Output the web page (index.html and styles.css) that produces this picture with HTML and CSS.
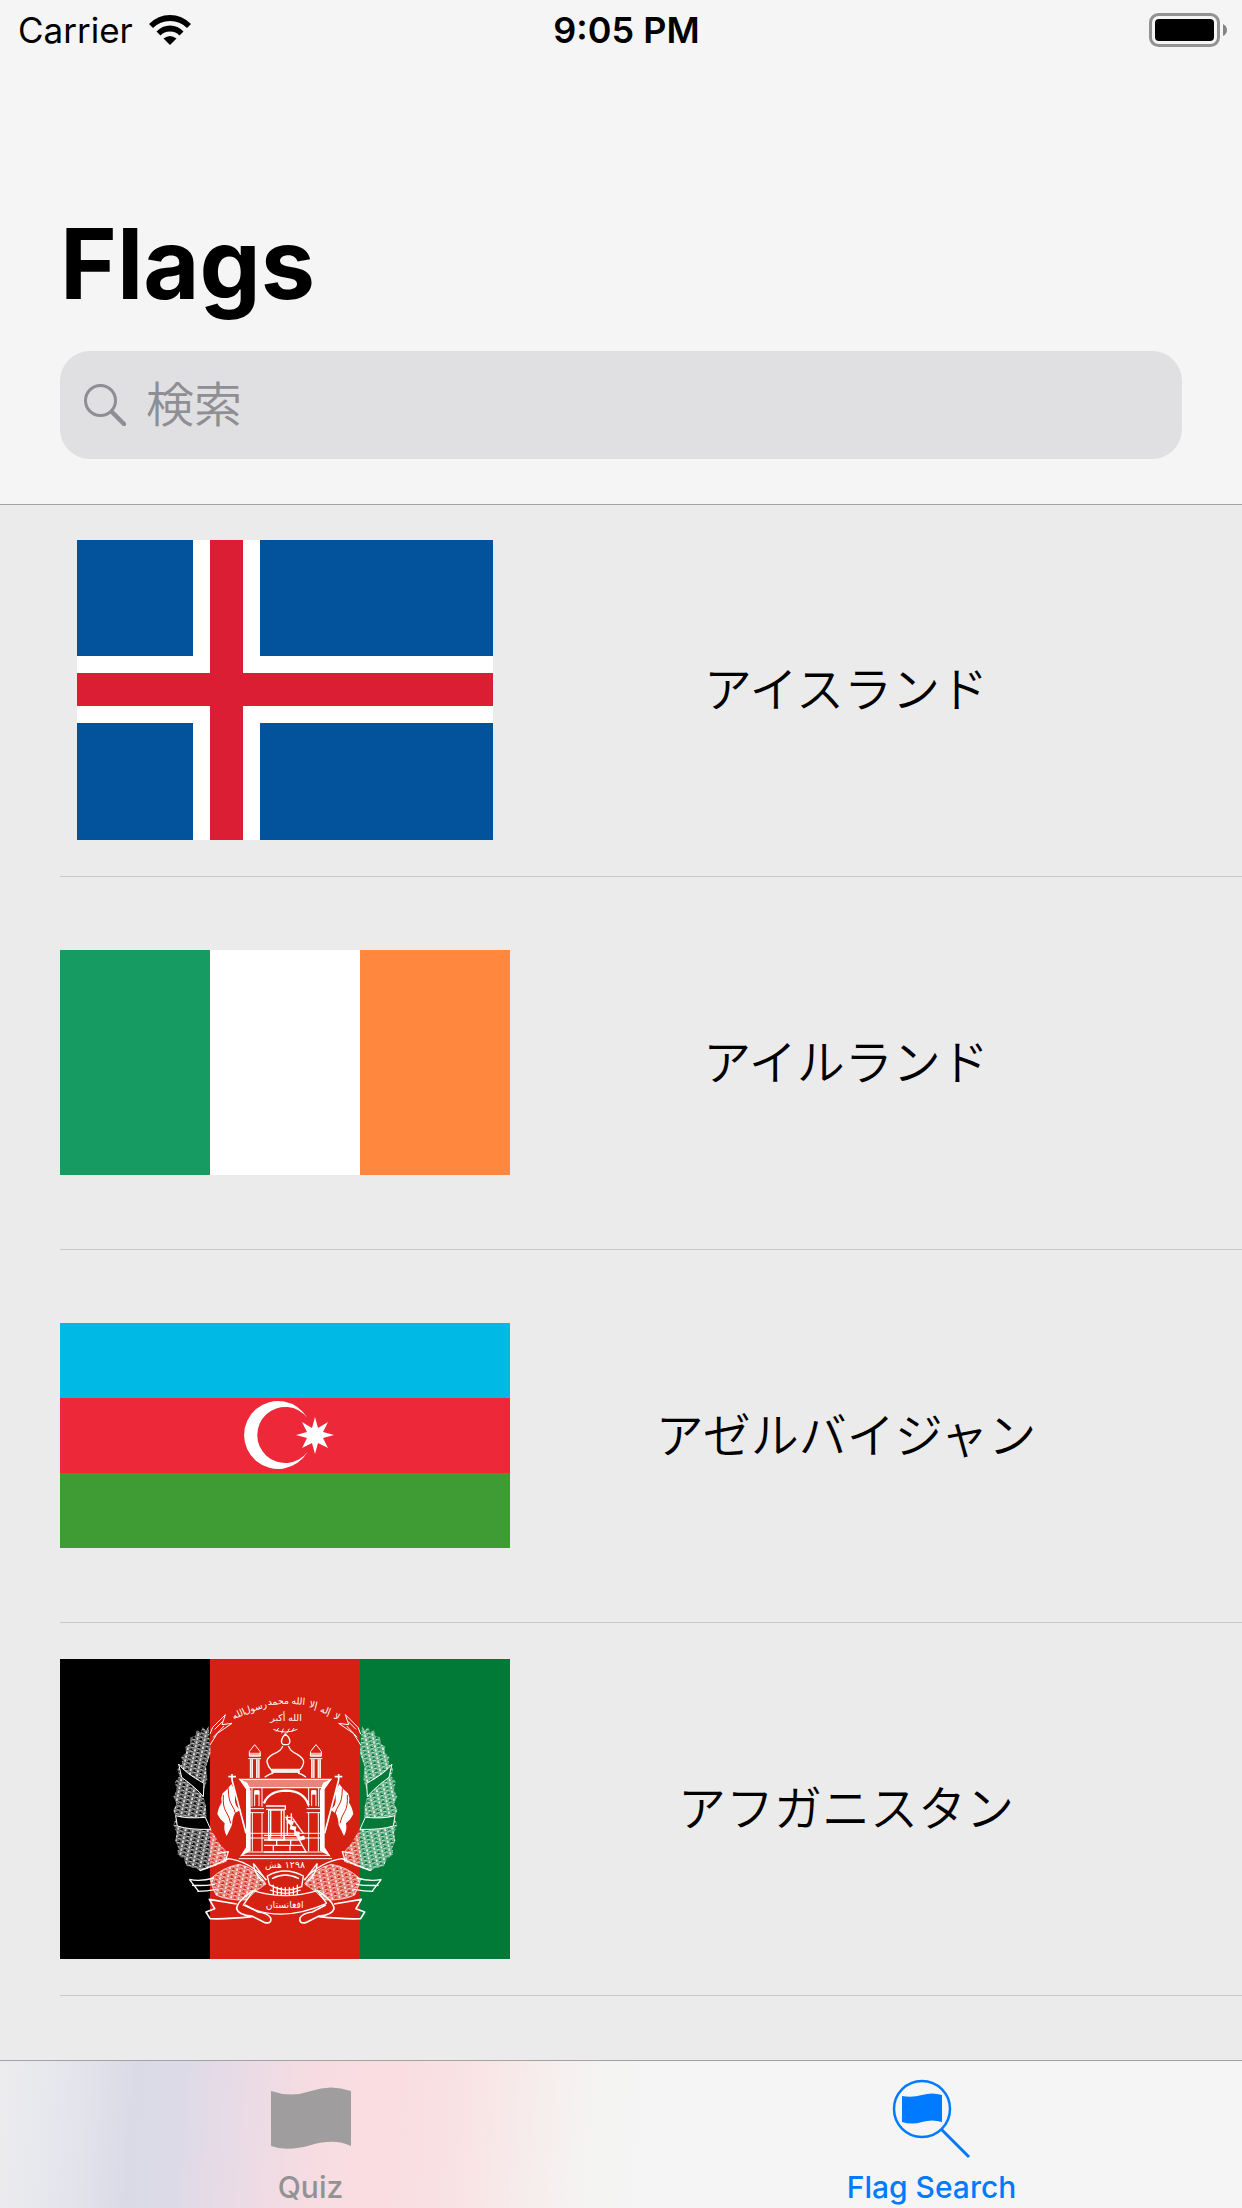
FILE: index.html
```html
<!DOCTYPE html>
<html lang="ja">
<head>
<meta charset="utf-8">
<meta name="viewport" content="width=device-width, initial-scale=1">
<title>Flags</title>
<link rel="stylesheet" href="styles.css">
</head>
<body>
<header class="header">
  <div class="status">
    <div class="carrier">
      <span>Carrier</span>
      <svg class="wifi" viewBox="0 0 42 30" aria-hidden="true">
        <path d="M0 9Q9 0 21 0T42 9L38 13Q31 6 21 6T4 13Z"/>
        <path d="M7.500 16.500Q13 10.500 21 10.500T34.500 16.500L30.500 20.500Q27 16.500 21 16.500T11.500 20.500Z"/>
        <path d="M14.500 23.500Q21 18.500 27.500 23.500L21 30Z"/>
      </svg>
    </div>
    <time class="clock">9:05 PM</time>
    <svg class="battery" viewBox="0 0 78 34" role="img" aria-label="Battery full">
      <rect x="1.500" y="1.500" width="68" height="31" rx="8" fill="none" stroke="#929292" stroke-width="3"/>
      <rect x="6" y="6" width="59" height="22" rx="4"/>
      <path d="M74 11Q78 13 78 17T74 23Z" fill="#858585"/>
    </svg>
  </div>
  <h1 class="title">Flags</h1>
  <label class="search">
    <svg class="search-icon" viewBox="0 0 42 42" fill="none" stroke="#8e8e93" aria-hidden="true">
      <circle cx="16.500" cy="16.500" r="15" stroke-width="3"/>
      <path d="M28 28L40 40" stroke-width="4.500" stroke-linecap="round"/>
    </svg>
    <input class="search-input" type="search" placeholder="検索" aria-label="検索">
  </label>
</header>

<main class="content">
  <ul class="list">
    <li class="row">
      <div class="flag">
        <svg class="flag-image iceland" viewBox="0 0 416 300" aria-hidden="true">
          <path fill="#02539c" d="M0 0H416V300H0Z"/>
          <path fill="#fff" d="M116 0H183V300H116ZM0 116H416V183H0Z"/>
          <path fill="#dc1e35" d="M133 0H166V300H133ZM0 133H416V166H0Z"/>
        </svg>
      </div>
      <span class="name">アイスランド</span>
    </li>
    <li class="row">
      <div class="flag">
        <svg class="flag-image" viewBox="0 0 450 225" aria-hidden="true">
          <path fill="#169b62" d="M0 0H150V225H0Z"/>
          <path fill="#fff" d="M150 0H300V225H150Z"/>
          <path fill="#ff883e" d="M300 0H450V225H300Z"/>
        </svg>
      </div>
      <span class="name">アイルランド</span>
    </li>
    <li class="row">
      <div class="flag">
        <svg class="flag-image" viewBox="0 0 450 225" aria-hidden="true">
          <path fill="#00b9e4" d="M0 0H450V75H0Z"/>
          <path fill="#ed2939" d="M0 75H450V150H0Z"/>
          <path fill="#3f9c35" d="M0 150H450V225H0Z"/>
          <path fill="#fff" d="M247.500 95A34 34 0 1 0 247.500 129A28 28 0 1 1 247.500 95Z"/>
          <path fill="#fff" d="M255 94L258 105L268 99L263 109L274 112L263 115L268 125L258 120L255 131L252 120L242 125L247 115L236 112L247 109L242 99L252 105Z"/>
        </svg>
      </div>
      <span class="name">アゼルバイジャン</span>
    </li>
    <li class="row">
      <div class="flag">
        <svg class="flag-image" viewBox="-300 27 1350 900" aria-hidden="true">
          <defs>
            <pattern id="wheat" width="22" height="24" patternUnits="userSpaceOnUse" patternTransform="rotate(12)">
              <path d="M11 0V24M11 11Q2 10 1 0Q10 1 11 11ZM11 11Q20 10 21 0Q12 1 11 11M11 23Q2 22 1 12Q10 13 11 23ZM11 23Q20 22 21 12Q12 13 11 23" fill="none" stroke="#fff" stroke-width="2.500" opacity=".85"/>
            </pattern>
            <g id="wreath" stroke-linejoin="round">
              <path fill="url(#wheat)" d="M146 228L138 242L128 230L122 248L110 240L106 258L92 262L90 282L76 290L78 308L64 320L66 340L52 358L58 378L45 396L50 420L40 440L50 462L40 480L48 505L40 525L50 548L46 572L54 592L52 612L72 628L80 648L106 655L122 664L200 635L196 600L178 580L160 550L140 515L138 470L128 430L142 390L138 350L152 310Z"/>
              <path fill="currentColor" stroke="#fff" stroke-width="3" d="M56 342Q76 370 132 400L130 440Q110 415 65 382ZM47 497Q80 507 136 502L152 538Q90 540 52 528Z"/>
              <path fill="none" stroke="#fff" stroke-width="3" d="M150 252L158 232L196 194L186 224L216 220L172 250L150 285M164 238L188 214M160 262L192 228"/>
              <!-- standard on its pole -->
              <path fill="none" stroke="#fff" stroke-width="5" d="M216 390L258 550M205 380H228M216 372V390"/>
              <path fill="#fff" d="M214 402Q228 425 225 445T240 480L225 490Q218 500 216 525L200 558Q190 540 194 520Q180 510 172 492Q176 470 185 458Q182 442 188 430Q202 420 214 402Z"/>
              <path fill="none" stroke="#d42111" stroke-width="3" d="M205 415Q205 450 215 465T226 490M190 435Q188 470 198 485T212 520"/>
              <!-- lower sheaves -->
              <path fill="url(#wheat)" stroke="#fff" stroke-width="2" d="M150 688Q190 650 238 643Q292 655 318 702Q280 725 260 750Q200 752 168 735Q160 720 150 688Z"/>
              <path fill="none" stroke="#fff" stroke-width="4" d="M120 662Q160 648 206 626Q270 635 320 690M88 688Q120 696 162 684M96 706Q130 708 165 703M112 724Q140 724 170 718M88 688L116 724M280 640L318 690M280 640Q284 676 310 694M176 610L205 605L196 634"/>
              <!-- scroll -->
              <path fill="none" stroke="#fff" stroke-width="5" d="M280 722Q232 752 230 776Q235 795 275 798L315 818Q336 822 332 804Q325 790 295 786L255 765M230 762L148 748L164 776L138 786L150 806Q200 808 276 800"/>
              <!-- minaret -->
              <path fill="none" stroke="#fff" stroke-width="3" d="M284 284L276 294Q264 303 268 318H301Q304 303 292 294ZM265 326H303M271 328V384M277 328V384M290 328V384M297 328V384"/>
              <path fill="#fff" opacity=".65" d="M270 328H279V384H270ZM289 328H298V384H289ZM267 308H302V320H267Z"/>
              <!-- columns -->
              <path fill="#fff" d="M236 386L262 398L272 422V602L240 620L258 592V418Z"/>
              <path fill="none" stroke="#fff" stroke-width="3" d="M276 414V470M306 414V470M284 468V422H297V468M270 476H312M270 488H312M277 488V604M306 488V604M270 550H376M270 564H376M250 606H376M242 616H376M236 626H376"/>
              <path fill="#fff" d="M284 422H298V434H284Z"/>
            </g>
          </defs>
          <path d="M-300 27H150V927H-300Z"/>
          <path fill="#d42111" d="M150 27H600V927H150Z"/>
          <path fill="#007a36" d="M600 27H1050V927H600Z"/>
          <use href="#wreath" color="#000"/>
          <use href="#wreath" color="#007a36" transform="translate(752 0) scale(-1 1)"/>
          <g fill="none" stroke="#fff" stroke-width="4">
            <path d="M376 252L368 262Q360 278 370 284H384Q394 278 386 262ZM368 288Q366 302 338 313Q320 324 321 336Q324 350 334 360H418Q430 350 431 336Q430 324 412 313Q388 302 386 288M334 366H420M314 382Q330 370 340 370M438 382Q424 370 414 370"/>
            <path d="M240 388H512L486 413H270Z" fill="#fff" fill-opacity=".45"/>
            <path d="M312 460Q326 423 378 422Q432 423 446 466" stroke-width="7"/>
            <path d="M326 480H372V570H326ZM318 468H376V478H318M332 480V560M364 480V560M382 496V556M394 490V515M376 502H398"/>
            <path d="M378 505L425 570M398 505L430 550" stroke-width="4"/>
            <path d="M382 513L400 520M390 532L408 536M402 550L419 551M415 567L434 562" stroke-width="12"/>
            <path d="M312 556H410L438 606H312M312 570H415M312 586H425M330 556V570M350 570V586M372 556V570M392 570V586M340 586V602M390 586V602"/>
            <path d="M322 678Q374 648 430 678L425 710Q375 732 328 704ZM336 686Q376 664 417 686M340 704V735M352 710V735M364 712V736M376 712V736M388 712V736M400 710V735M412 704V735"/>
            <path d="M280 722Q375 752 472 722L500 760M280 722L250 765Q360 822 500 760M330 720Q376 740 422 720"/>
          </g>
          <path d="M334 367H418V356H334Z" fill="#fff" opacity=".75"/>
          <g fill="#fff" text-anchor="middle">
            <text class="script" transform="translate(240 200) rotate(-25)">الله</text>
            <text class="script" transform="translate(288 181) rotate(-18)">رسول</text>
            <text class="script" transform="translate(355 163) rotate(-3)">محمد</text>
            <text class="script" transform="translate(414 163) rotate(5)">الله</text>
            <text class="script" transform="translate(458 174) rotate(14)">إلا</text>
            <text class="script" transform="translate(493 190) rotate(22)">إله</text>
            <text class="script" transform="translate(526 208) rotate(30)">لا</text>
            <text class="script" x="378" y="214">الله أكبر</text>
            <path d="M340 238Q376 254 412 238M348 245L356 234M365 250L370 236M380 250L388 236M394 246L402 234" fill="none" stroke="#fff" stroke-width="3"/>
            <text class="script" x="375" y="655">١٢٩٨ هش</text>
            <text class="script" x="374" y="774">افغانستان</text>
          </g>
        </svg>
      </div>
      <span class="name">アフガニスタン</span>
    </li>
  </ul>
</main>

<nav class="tabs">
  <a class="tab" href="#quiz">
    <svg class="tab-icon" viewBox="0 0 80 80" fill="#a09d9e" aria-hidden="true">
      <path d="M0 12Q20 19 40 12T80 12V67Q64 59 40 66T0 67Z"/>
    </svg>
    <span>Quiz</span>
  </a>
  <a class="tab active" href="#search" aria-current="page">
    <svg class="tab-icon" viewBox="0 0 80 80" fill="currentColor" aria-hidden="true">
      <circle cx="30" cy="30" r="28" fill="none" stroke="currentColor" stroke-width="2.500"/>
      <path d="M49 50L77 78" stroke="currentColor" stroke-width="3"/>
      <path d="M10 17Q20 19 30 16T50 16V43Q40 40 30 43T10 43Z"/>
    </svg>
    <span>Flag Search</span>
  </a>
</nav>
</body>
</html>
```
FILE: styles.css
```css
* {
  box-sizing: border-box;
}

body {
  margin: 0;
  min-height: 100vh;
  display: flex;
  flex-direction: column;
  background: #ebebeb;
  color: #000;
  font-family: Inter, "Noto Sans CJK JP", sans-serif;
}

.header {
  background: #f5f5f5;
  border-bottom: 1px solid #a3a3a5;
  padding-bottom: 45px;
}

.status {
  display: grid;
  grid-template-columns: 1fr auto 1fr;
  align-items: center;
  height: 60px;
  padding: 0 15px 0 18px;
  font-size: 36px;
  line-height: 60px;
}

.carrier {
  display: flex;
  align-items: center;
  gap: 16px;
  font-size: 35px;
}

.wifi {
  width: 42px;
  height: 30px;
}

.clock {
  padding-left: 8px;
  font-weight: 600;
}

.battery {
  width: 78px;
  height: 34px;
  justify-self: end;
}

.title {
  margin: 144px 60px 27px;
  font-size: 97px;
  line-height: 120px;
  font-weight: 700;
}

.search {
  display: flex;
  align-items: center;
  gap: 20px;
  height: 108px;
  margin: 0 60px;
  padding: 0 24px;
  border-radius: 30px;
  background: #e0e0e2;
}

.search-icon {
  width: 42px;
  height: 42px;
  flex: none;
}

.search-input {
  flex: 1;
  min-width: 0;
  padding: 0;
  border: 0;
  outline: 0;
  background: none;
  color: #000;
  font: 350 48px/72px Inter, "Noto Sans CJK JP", sans-serif;
}

.search-input::placeholder {
  color: #8e8e93;
  opacity: 1;
}

.content {
  flex: 1;
}

.list {
  margin: 0;
  padding: 0 0 0 60px;
  list-style: none;
}

.row {
  display: flex;
  align-items: center;
  height: 373px;
  padding: 35px 60px 36px 0;
  border-bottom: 1px solid #c8c7cc;
}

.row:first-child {
  height: 372px;
}

.flag {
  display: flex;
  align-items: center;
  justify-content: center;
  width: 450px;
  height: 300px;
}

.flag-image {
  display: block;
  width: 100%;
}

.iceland {
  width: 416px;
}

.name {
  flex: 1;
  text-align: center;
  font-size: 48px;
  line-height: 72px;
  font-weight: 350;
}

.script {
  font-family: "DejaVu Sans", sans-serif;
  font-size: 28px;
}

.tabs {
  position: sticky;
  bottom: 0;
  display: flex;
  height: 148px;
  border-top: 1px solid #a3a3a5;
  background: linear-gradient(95deg, #ececee 0%, #e6e7ed 5%, #dadae7 11%, #dddae7 15%, #e8dbe6 19%, #f6dce2 25%, #fadde1 31%, #f9e2e4 37%, #f7ebeb 42%, #f4f4f3 48%, #f5f5f5 52%);
}

.tab {
  flex: 1;
  display: flex;
  flex-direction: column;
  align-items: center;
  padding-top: 18px;
  gap: 10px;
  color: #929292;
  font-size: 30px;
  line-height: 36px;
  font-weight: 500;
  text-decoration: none;
}

.tab.active {
  color: #007aff;
}

.tab-icon {
  width: 80px;
  height: 80px;
}
```
